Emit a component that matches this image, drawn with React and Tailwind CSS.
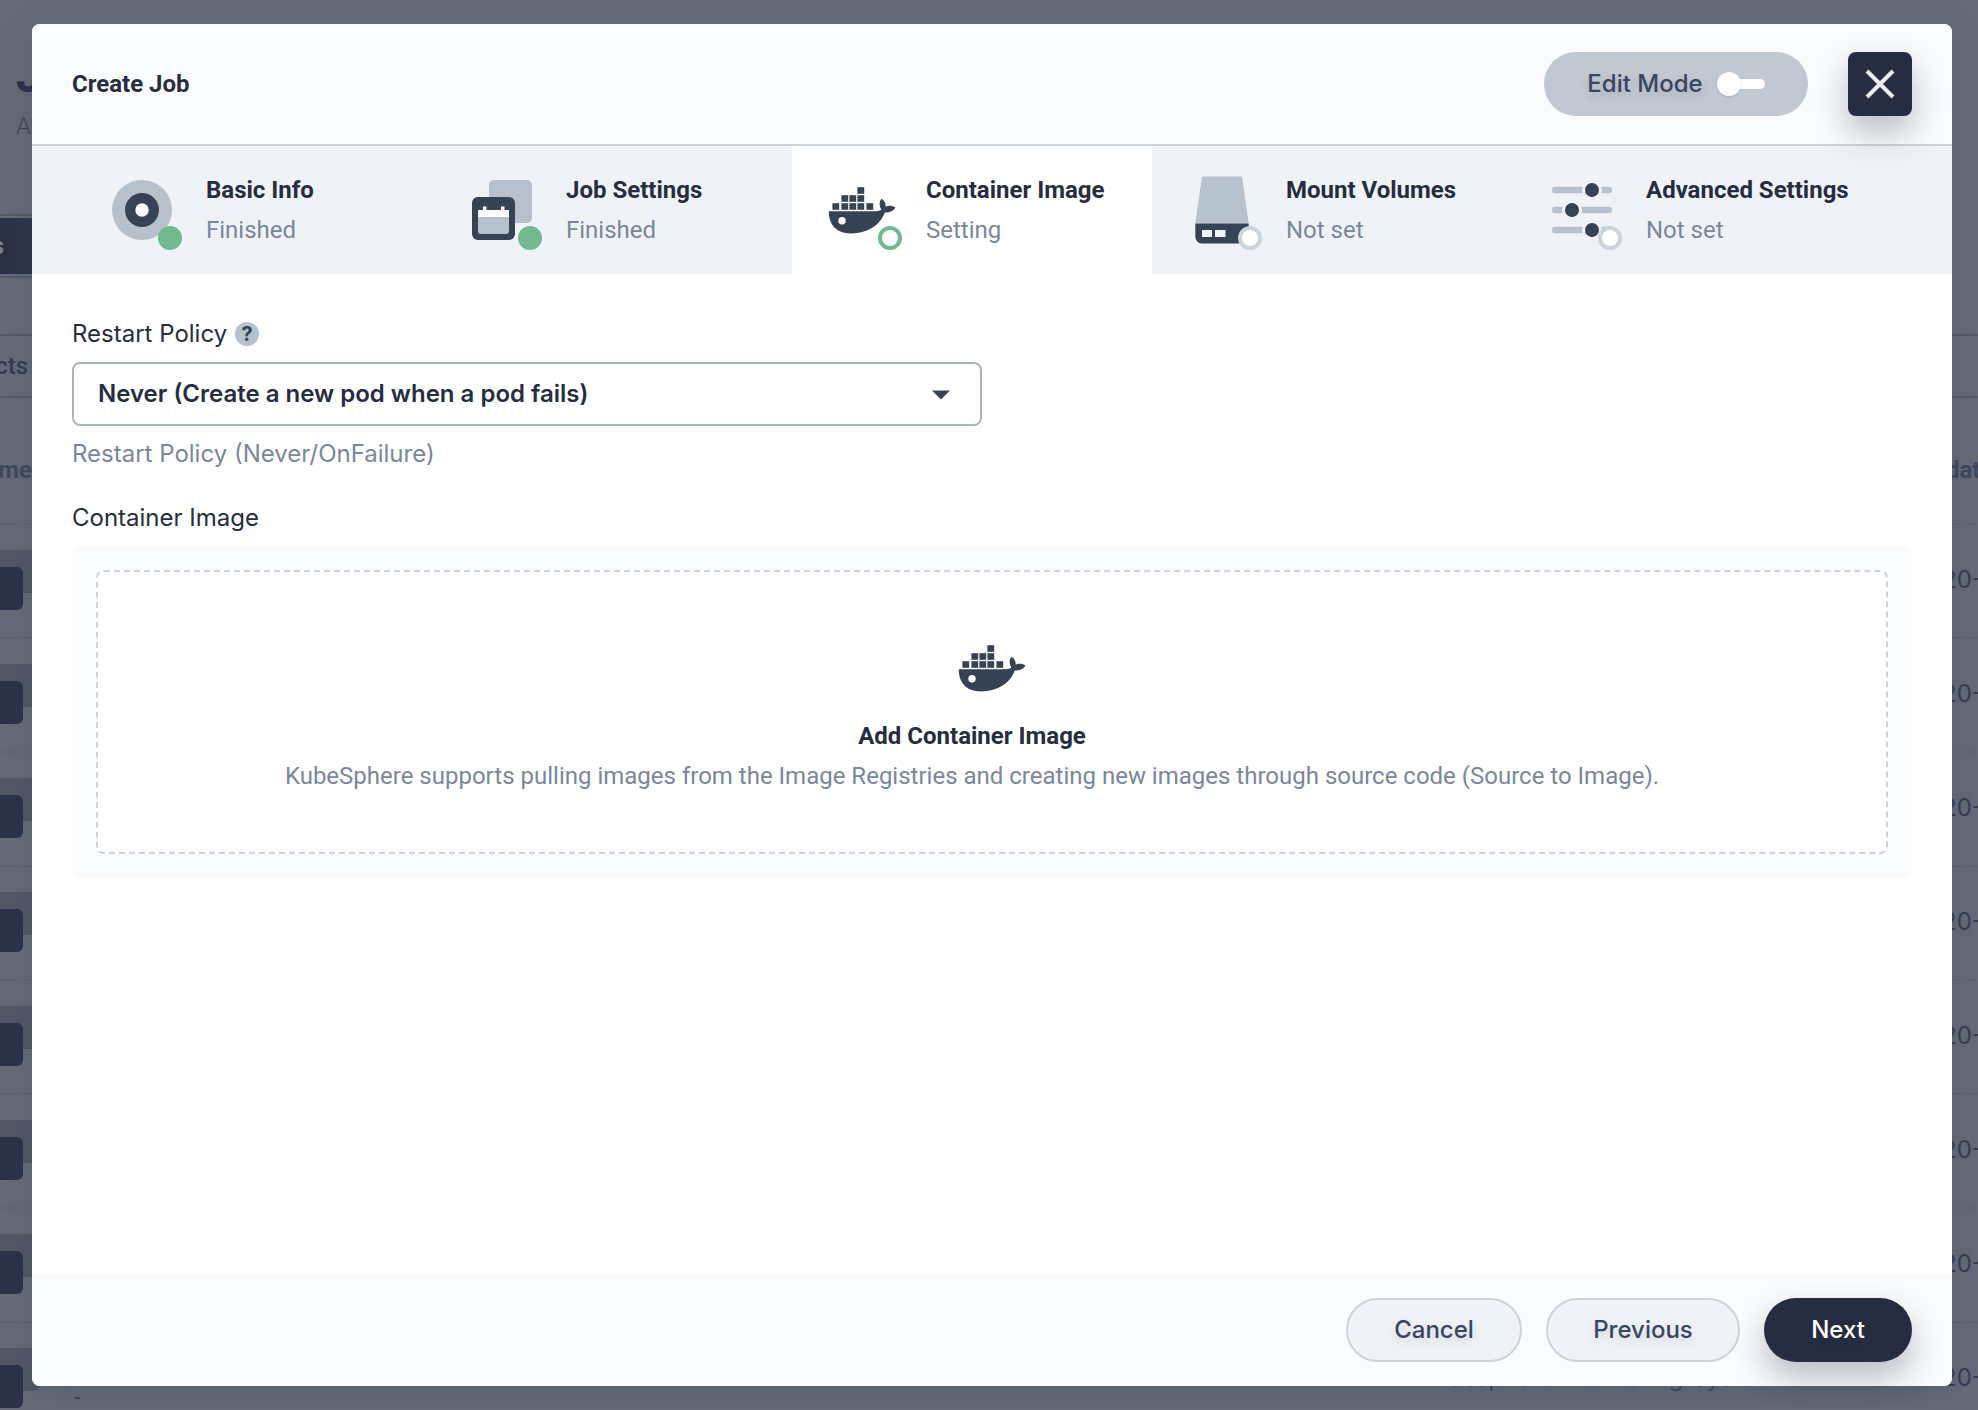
const ROBOTO = "font-[Roboto,sans-serif]";
const BODY = "font-[Inter,sans-serif]";

function DockerIcon() {
  const boxes = [
    [35, 17],
    [19, 25], [27, 25], [35, 25],
    [10, 33], [19, 33], [27, 33], [35, 33], [44, 33],
  ];
  return (
    <svg viewBox="0 0 80 80" className="size-20" fill="#364355" aria-hidden="true">
      {boxes.map(([x, y]) => (
        <rect key={`${x}-${y}`} x={x + 0.4} y={y + 0.2} width="6.8" height="6.6" />
      ))}
      <path d="M6.8 41.2H53.6C56.3 41.2 58.2 40.6 59.4 39.6C57 36 57 31.5 59.6 28.8C62.4 30.6 64 33.5 63.6 36.4C67 35.4 71 35.6 73.4 37.4C71.6 41 67.5 42.8 62.8 42.5C58.5 54.5 46 63.4 29 63.4C14 63.4 6.6 54 6.8 41.2Z" />
      <circle cx="20" cy="50.7" r="3.7" fill="#fff" />
    </svg>
  );
}

function InfoIcon() {
  return (
    <svg viewBox="0 0 80 80" className="size-20" aria-hidden="true">
      <circle cx="40" cy="40" r="30" fill="#b8c0cc" />
      <circle cx="40" cy="40" r="17" fill="#364355" />
      <circle cx="40" cy="40" r="6.7" fill="#fff" />
    </svg>
  );
}

function JobIcon() {
  return (
    <svg viewBox="0 0 80 80" className="size-20" aria-hidden="true">
      <rect x="27" y="10" width="43" height="43" rx="5" fill="#b8c0cc" />
      <rect x="10" y="27" width="43" height="43" rx="6" fill="#364355" />
      <path d="M16 47h31v14a3 3 0 0 1-3 3H19a3 3 0 0 1-3-3z" fill="#b6c2cd" />
      <path d="M16 40h5v-3.5h3.500V40H39v-3.500h3.500V40H47v7H16z" fill="#fff" />
    </svg>
  );
}

function VolumeIcon() {
  return (
    <svg viewBox="0 0 80 80" className="size-20" aria-hidden="true">
      <path d="M20 6.500H60L66.700 53.500H13.300z" fill="#b6c2cd" />
      <path d="M13.300 53.500H66.700V67a6.500 6.500 0 0 1-6.500 6.500H19.800a6.500 6.500 0 0 1-6.500-6.500z" fill="#364355" />
      <path d="M20 60h10v7H20zM33 60h10.500v7H33z" fill="#eff4f9" />
    </svg>
  );
}

function SlidersIcon() {
  const rows = [[20, 50], [40, 30], [60, 50]];
  return (
    <svg viewBox="0 0 80 80" className="size-20" aria-hidden="true">
      {rows.map(([y, x]) => (
        <g key={y}>
          <rect x="10" y={y - 3.2} width="60" height="6.4" rx="3" fill="#b8c2ce" />
          <circle cx={x} cy={y} r="8.5" fill="#364355" stroke="#eff3f8" strokeWidth="3" />
        </g>
      ))}
    </svg>
  );
}

const steps = [
  { title: "Basic Info", state: "Finished", Icon: InfoIcon },
  { title: "Job Settings", state: "Finished", Icon: JobIcon },
  { title: "Container Image", state: "Setting", Icon: DockerIcon },
  { title: "Mount Volumes", state: "Not set", Icon: VolumeIcon },
  { title: "Advanced Settings", state: "Not set", Icon: SlidersIcon },
];

const dotStyles = {
  Finished: "border-[#72b98f] bg-[#72b98f]",
  Setting: "border-[#72b98f] bg-white",
  "Not set": "border-[#cbd3db] bg-white",
};

function Step({ title, state, Icon }) {
  const active = state === "Setting";
  return (
    <li className={active ? "w-[360px] bg-white" : "w-[360px]"}>
      <button
        type="button"
        aria-current={active ? "step" : undefined}
        className="flex w-full items-center gap-6 py-6 pl-[30px] text-left text-2xl leading-10 whitespace-nowrap"
      >
        <span className="relative shrink-0">
          <Icon />
          <span className={`absolute right-0 bottom-0 size-6 rounded-full border-4 ${dotStyles[state]}`} />
        </span>
        <span className="flex flex-col">
          <span className="font-bold text-[#272d40]">{title}</span>
          <span className="text-[#79879c]">{state}</span>
        </span>
      </button>
    </li>
  );
}

function Backdrop() {
  return (
    <div aria-hidden="true" className="absolute inset-0 flex flex-col overflow-hidden bg-[#656b77] text-2xl whitespace-nowrap text-[#343c52]">
      <div className="flex h-[214px] shrink-0 flex-col pl-4">
        <span className="pt-12 text-5xl leading-[56px] font-bold text-[#283046]">J</span>
        <span className="leading-[44px] font-light text-[#3f475c]">A</span>
      </div>
      <div className="flex h-16 w-60 shrink-0 items-center border-y-2 border-[#525a6b] py-0.5">
        <span className="flex h-full flex-1 items-center bg-[#2a3247]">
          <span className="flex w-1 justify-end font-bold text-[#7d828c]">s</span>
        </span>
      </div>
      <div className="h-14 shrink-0" />
      <div className="flex h-16 shrink-0 items-center border-y-2 border-[#525a6b] font-medium">
        <span className="flex w-7 justify-end">cts</span>
      </div>
      <div className="flex h-[125px] shrink-0 items-center justify-between font-bold text-[#3f485c]">
        <span className="flex w-8 justify-end pt-[18px]">me</span>
        <span className="flex w-8 pt-[18px]">dat</span>
      </div>
      {Array.from({ length: 8 }, (_, i) => (
        <div key={i} className="flex h-[114px] shrink-0 justify-between border-t-2 border-[#606674]">
          <div className="relative mt-[25px] h-[43px] w-10 rounded-r-md bg-[#525867]">
            <div className="absolute top-[17px] left-0 h-[43px] w-[23px] rounded-r-md bg-[#2a3247]" />
          </div>
          {i === 7 && <span className="flex-1 pt-[62px] pl-[34px] leading-6">-</span>}
          <div className={`flex items-center gap-[168px] pb-0.5 ${BODY}`}>
            {i === 7 && <span className="font-light">kubesphere-monitoring-system</span>}
            <span className="w-9">20-</span>
          </div>
        </div>
      ))}
    </div>
  );
}

const pill =
  "h-16 rounded-full text-2xl font-medium [text-shadow:0_4px_8px_rgba(36,46,66,0.15)]";

export default function App() {
  return (
    <div className={`relative flex min-h-screen py-6 pr-[26px] pl-8 text-[#272d40] ${ROBOTO}`}>
      <Backdrop />
      <div
        role="dialog"
        aria-labelledby="dialog-title"
        className="relative flex flex-1 flex-col rounded-lg bg-white shadow-[0_8px_32px_rgba(54,67,92,0.3)]"
      >
        <header className="relative z-10 flex h-[122px] items-center rounded-t-lg border-b-2 border-[#ccd3db] bg-[#fafbfd] px-10">
          <h1 id="dialog-title" className="flex-1 text-2xl font-bold">Create Job</h1>
          <button
            type="button"
            role="switch"
            aria-checked="false"
            className={`flex w-[264px] items-center justify-center gap-3.5 bg-[#c1c8d1] text-[#3a4560] ${pill} ${BODY}`}
          >
            Edit Mode
            <span className="flex w-12 items-center">
              <span className="z-10 size-6 rounded-full bg-white shadow-sm" />
              <span className="-ml-2 h-2.5 flex-1 rounded-full bg-white" />
            </span>
          </button>
          <button
            type="button"
            aria-label="Close"
            className="ml-10 flex size-16 items-center justify-center rounded-lg bg-[#272d40] shadow-[0_16px_32px_rgba(36,46,66,0.3)]"
          >
            <svg viewBox="0 0 32 32" className="size-8" stroke="#eceef0" strokeWidth="4" aria-hidden="true">
              <path d="M3 3 29 29M29 3 3 29" />
            </svg>
          </button>
        </header>

        <nav aria-label="Steps" className="bg-[#eff3f8] pl-10">
          <ol className="flex">
            {steps.map((s) => (
              <Step key={s.title} {...s} />
            ))}
          </ol>
        </nav>

        <main className="flex flex-1 flex-col px-10 pt-10">
          <div className={`flex h-10 items-center gap-2 text-2xl ${BODY}`}>
            <label htmlFor="restart-policy">Restart Policy</label>
            <button
              type="button"
              aria-label="Help"
              className="flex size-6 items-center justify-center rounded-full bg-[#b6c2cd] text-xl leading-6 font-bold text-[#364355]"
            >
              ?
            </button>
          </div>
          <div className="relative mt-2 w-1/2 max-w-[910px]">
            <select
              id="restart-policy"
              className={`h-16 w-full appearance-none rounded-lg border-2 border-[#abb4be] bg-white px-6 text-2xl font-semibold ${BODY}`}
            >
              <option>Never (Create a new pod when a pod fails)</option>
            </select>
            <svg viewBox="0 0 18 10" className="pointer-events-none absolute top-7 right-8 h-2.5 w-[18px]" fill="#364355" aria-hidden="true">
              <path d="M0 0.500H18L9 9.500z" />
            </svg>
          </div>
          <p className={`mt-2 text-2xl leading-10 text-[#79879c] ${BODY}`}>Restart Policy (Never/OnFailure)</p>
          <h2 className={`mt-6 text-2xl leading-10 ${BODY}`}>Container Image</h2>
          <div className="mt-2 rounded-lg bg-[#fafbfd] p-6">
            <button
              type="button"
              className="flex w-full flex-col items-center rounded-lg border-2 border-dashed border-[#ccd3db] bg-white py-14 text-2xl leading-10"
            >
              <DockerIcon />
              <span className="mt-2 pr-10 font-bold">Add Container Image</span>
              <span className="pr-10 text-[#79879c]">
                KubeSphere supports pulling images from the Image Registries and creating new images through source
                code (Source to Image).
              </span>
            </button>
          </div>
        </main>

        <footer className={`flex justify-end gap-6 rounded-b-lg bg-[#fafbfd] px-10 py-6 ${BODY}`}>
          <button type="button" className={`w-44 border-2 border-[#ccd3db] bg-[#eff3f8] text-[#3a4560] ${pill}`}>Cancel</button>
          <button type="button" className={`w-[194px] border-2 border-[#ccd3db] bg-[#eff3f8] text-[#3a4560] ${pill}`}>Previous</button>
          <button type="button" className={`w-[148px] bg-[#272d40] text-white shadow-[0_16px_32px_rgba(36,46,66,0.3)] ${pill}`}>Next</button>
        </footer>
      </div>
    </div>
  );
}
